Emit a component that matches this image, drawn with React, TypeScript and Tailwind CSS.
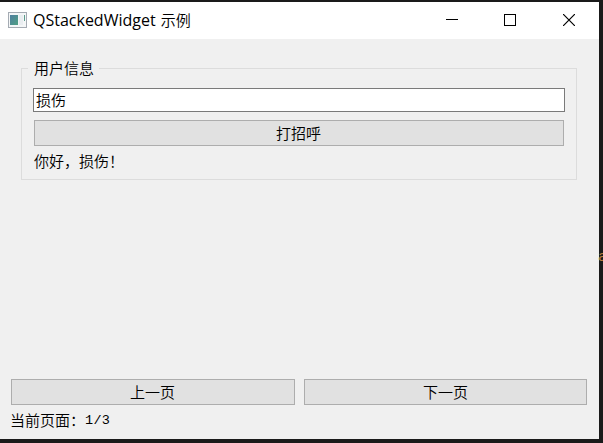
import type { ReactNode } from "react";

function TitleBar() {
  return (
    <header className="flex h-[37px] shrink-0 items-center bg-white pl-2">
      <svg width="19" height="16" viewBox="0 0 19 16" className="mb-px shrink-0" shapeRendering="crispEdges">
        <defs>
          <linearGradient id="pane" x1="0" y1="0" x2="1" y2="1">
            <stop offset="0" stopColor="#4f7fa0" />
            <stop offset="1" stopColor="#4fa083" />
          </linearGradient>
        </defs>
        <rect x="0.5" y="0.5" width="18" height="15" fill="#f4f6f7" stroke="#a5abb3" />
        <rect x="2" y="3" width="8" height="10" fill="url(#pane)" />
        <rect x="11" y="3" width="4" height="10" fill="#e9edf0" />
        <rect x="16" y="3" width="1" height="6" fill="#5b9b8b" />
      </svg>
      <h1 className="mb-[2px] ml-[6px] grow whitespace-nowrap text-[16px] leading-5">
        QStackedWidget <span className="ml-px text-[15px] font-[350]">示例</span>
      </h1>
      <div className="flex h-full text-black">
        <button className="flex w-[58px] items-center justify-center" aria-label="最小化">
          <svg width="12" height="12" className="mb-px" shapeRendering="crispEdges">
            <path d="M0 5.5H12" stroke="currentColor" />
          </svg>
        </button>
        <button className="flex w-[58px] items-center justify-center" aria-label="最大化">
          <svg width="12" height="12" className="mb-px" shapeRendering="crispEdges">
            <rect x="0.5" y="0.5" width="11" height="11" fill="none" stroke="currentColor" />
          </svg>
        </button>
        <button className="flex w-[60px] items-center justify-center" aria-label="关闭">
          <svg width="12" height="12" className="mb-px">
            <path d="M0 0L12 12M12 0L0 12" stroke="currentColor" strokeWidth="1.2" />
          </svg>
        </button>
      </div>
    </header>
  );
}

function PushButton({ children, className = "" }: { children: ReactNode; className?: string }) {
  return (
    <button className={`flex h-[26px] items-center justify-center border border-[#adadad] bg-[#e1e1e1] text-[15px] leading-5 ${className}`}>
      {children}
    </button>
  );
}

export default function App() {
  return (
    <div className="relative h-[443px] w-[603px] overflow-hidden bg-[#1a1a1a] pt-[2px] font-['Open_Sans','Noto_Sans_CJK_SC',sans-serif] text-black">
      <div className="flex h-[437px] w-[599px] flex-col bg-[#f0f0f0]">
        <TitleBar />
        <main className="flex grow flex-col font-['Noto_Sans_CJK_SC',sans-serif] text-[15px] font-[350]">
          <fieldset className="ml-[21px] mt-[19px] flex h-[122px] w-[556px] flex-col border border-[#dcdcdc] pl-[11px]">
            <legend className="-ml-[5px] h-5 pl-[6px] pr-[5px] leading-5">用户信息</legend>
            <input
              className="mt-[10px] h-6 w-[532px] shrink-0 border border-[#7a7a7a] bg-white pb-[2px] pl-[2px] leading-5 outline-none"
              defaultValue="损伤"
            />
            <PushButton className="ml-px mt-2 w-[530px] shrink-0 pr-px">打招呼</PushButton>
            <p className="ml-px mt-[5px] leading-5">你好，损伤！</p>
          </fieldset>
          <div className="mt-auto flex gap-[9px] pl-[11px]">
            <PushButton className="w-[284px] pr-px">上一页</PushButton>
            <PushButton className="w-[283px]">下一页</PushButton>
          </div>
          <p className="mb-[9px] ml-[10px] mt-[5px] flex h-5 leading-5">
            当前页面：<span className="mt-px font-['Liberation_Mono',monospace] text-[13.5px] font-normal tracking-[0.3px]">1/3</span>
          </p>
        </main>
      </div>
      <span className="absolute left-[598px] top-[250px] w-[5px] overflow-hidden font-['Liberation_Mono',monospace] text-[15px] leading-4 text-[#b97a3d]">a</span>
    </div>
  );
}
